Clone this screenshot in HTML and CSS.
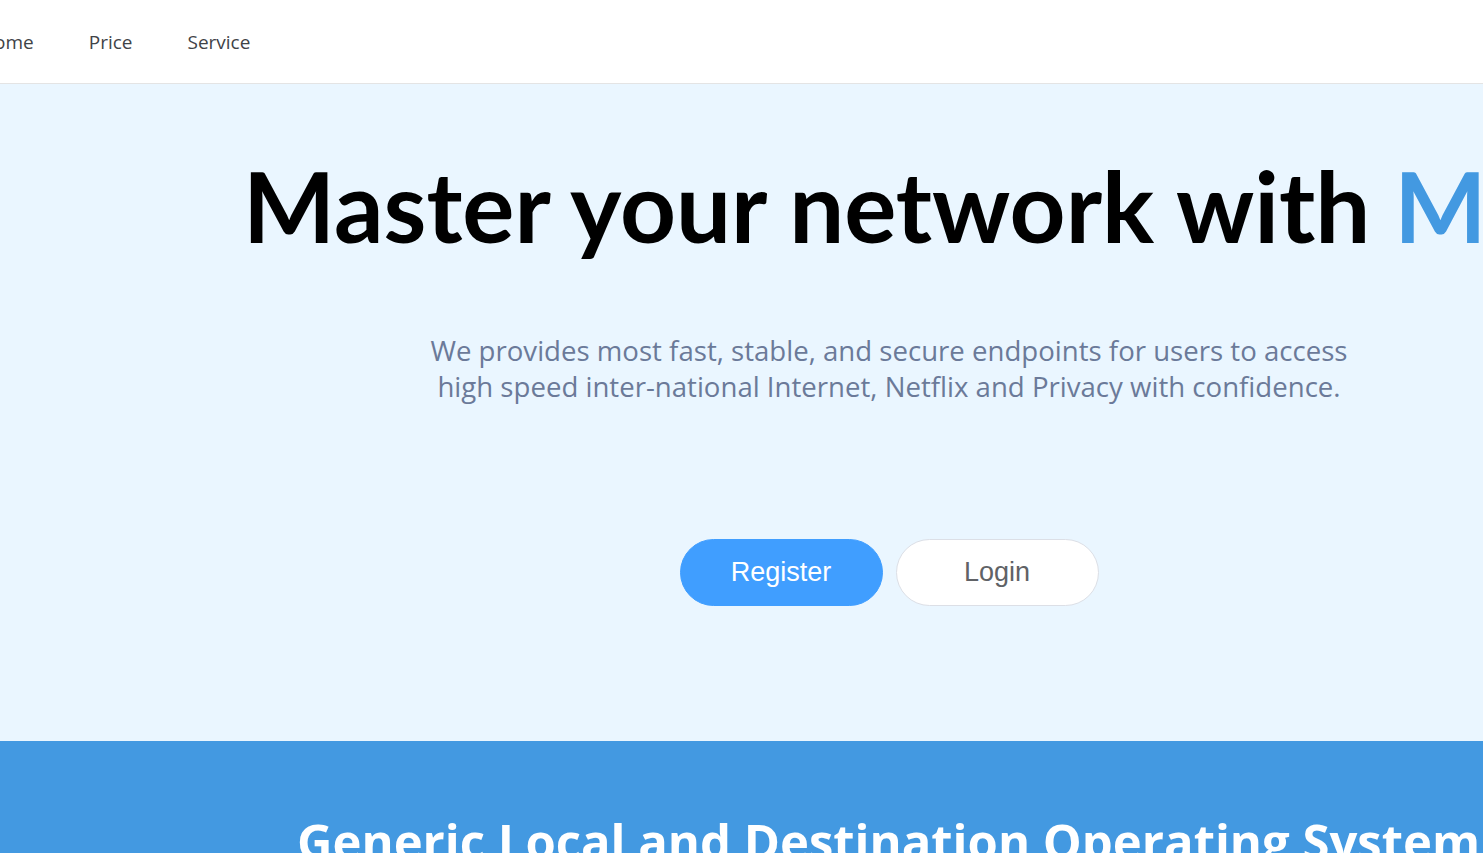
FILE: index.html
```html
<!DOCTYPE html>
<html lang="en">
<head>
<meta charset="utf-8">
<title>Master your network</title>
<link rel="stylesheet" href="styles.css">
</head>
<body>
<div class="page">
  <header class="nav">
    <ul class="nav-list">
      <li class="nav-item">Home</li>
      <li class="nav-item">Price</li>
      <li class="nav-item">Service</li>
    </ul>
  </header>
  <section class="hero">
    <h1 class="hero-title">Master your network with <span class="brand">MyNetwork</span></h1>
    <p class="hero-sub">We provides most fast, stable, and secure endpoints for users to access<br>high speed inter-national Internet, Netflix and Privacy with confidence.</p>
    <div class="hero-actions">
      <button class="btn btn-primary">Register</button>
      <button class="btn btn-default">Login</button>
    </div>
  </section>
  <section class="feature">
    <h2 class="feature-title">Generic Local and Destination Operating System</h2>
  </section>
</div>
</body>
</html>
```

FILE: styles.css
```css
html, body {
  margin: 0;
  padding: 0;
  overflow: hidden;
  background: #ffffff;
}
.page {
  width: 1778px;
  font-family: "Open Sans", "Noto Sans", sans-serif;
}
.nav {
  height: 83px;
  border-bottom: 1px solid #e4e4e4;
  display: flex;
  align-items: center;
  background: #fff;
}
.nav-list {
  list-style: none;
  margin: 0 0 0 -20px;
  padding: 0;
  display: flex;
  gap: 55px;
}
.nav-item {
  font-size: 19px;
  color: #3f4347;
  line-height: 24px;
}
.hero {
  height: 657px;
  background: #eaf6ff;
  display: flex;
  flex-direction: column;
  overflow: hidden;
}
.hero-title {
  margin: 62px 0 0 0;
  padding-left: 243px;
  font-family: "Lato", "Open Sans", sans-serif;
  font-size: 97.6px;
  line-height: 120px;
  font-weight: 700;
  color: #000;
  white-space: nowrap;
}
.brand { color: #4399e1; }
.hero-sub {
  margin: 66px 0 0 0;
  text-align: center;
  font-size: 27.6px;
  line-height: 36px;
  color: #6b7a99;
}
.hero-actions {
  margin-top: 135px;
  display: flex;
  justify-content: center;
  gap: 13px;
}
.btn {
  width: 203px;
  height: 67px;
  border-radius: 34px;
  font-family: "Liberation Sans", Arial, sans-serif;
  font-size: 27px;
  cursor: pointer;
}
.btn-primary {
  background: #409eff;
  border: 1px solid #409eff;
  color: #fff;
}
.btn-default {
  background: #fff;
  border: 1px solid #dcdfe6;
  color: #606266;
}
.feature {
  background: #4399e1;
  height: 300px;
  padding-top: 70px;
}
.feature-title {
  margin: 0;
  padding-left: 297px;
  font-size: 49px;
  line-height: 60px;
  color: #fff;
  font-weight: 700;
  white-space: nowrap;
}
```
